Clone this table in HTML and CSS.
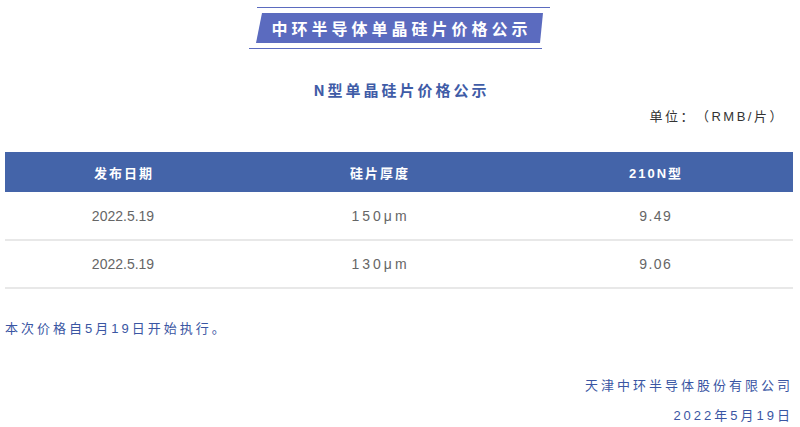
FILE: index.html
```html
<!DOCTYPE html>
<html lang="zh">
<head>
<meta charset="utf-8">
<link rel="stylesheet" href="styles.css">
</head>
<body>
<div class="banner">
  <div class="rule rule-top"></div>
  <div class="plate">中环半导体单晶硅片价格公示</div>
  <div class="rule rule-bottom"></div>
</div>
<h2 class="subtitle">N型单晶硅片价格公示</h2>
<div class="unit">单位：（RMB/片）</div>
<table class="prices">
  <colgroup><col class="c1"><col class="c2"><col class="c3"></colgroup>
  <thead>
    <tr><th>发布日期</th><th>硅片厚度</th><th>210N型</th></tr>
  </thead>
  <tbody>
    <tr><td class="date">2022.5.19</td><td class="thick">150μm</td><td class="price">9.49</td></tr>
    <tr><td class="date">2022.5.19</td><td class="thick">130μm</td><td class="price">9.06</td></tr>
  </tbody>
</table>
<p class="note">本次价格自5月19日开始执行。</p>
<div class="sign">
  <div class="company">天津中环半导体股份有限公司</div>
  <div class="sdate">2022年5月19日</div>
</div>
</body>
</html>
```

FILE: styles.css
```css
* { box-sizing: border-box; }
body {
  margin: 0;
  width: 800px;
  background: #ffffff;
  font-family: "Liberation Sans", "Noto Sans CJK SC", sans-serif;
  color: #333333;
  text-spacing-trim: space-all;
}
.banner {
  width: 301px;
  margin: 7px 0 0 249px;
  display: flex;
  flex-direction: column;
}
.rule {
  height: 1px;
  background: #5b6bbf;
}
.rule-top {
  margin-left: 8px;
  width: 293px;
}
.rule-bottom {
  width: 293px;
  margin-top: 5px;
}
.plate {
  margin-top: 5px;
  margin-left: 7px;
  width: 287px;
  height: 30px;
  background: #5b6bbf;
  clip-path: polygon(6px 0, 100% 0, calc(100% - 3px) 100%, 0 100%);
  color: #ffffff;
  font-family: "Noto Sans CJK SC", sans-serif;
  font-weight: 700;
  font-size: 16px;
  letter-spacing: 4px;
  text-indent: 4px;
  line-height: 30px;
  text-align: center;
}
.subtitle {
  margin: 31px 0 0 0;
  font-family: "Noto Sans CJK SC", sans-serif;
  font-size: 15px;
  font-weight: 700;
  letter-spacing: 3px;
  text-indent: 3px;
  line-height: 20px;
  text-align: center;
  color: #3f5ca7;
}
.unit {
  margin-top: 8px;
  line-height: 18px;
  font-size: 13px;
  letter-spacing: 2.5px;
  text-align: right;
  padding-right: 15px;
  color: #333333;
}
.prices {
  margin: 26px 0 0 5px;
  width: 788px;
  border-collapse: collapse;
  table-layout: fixed;
}
.c1 { width: 236px; }
.c2 { width: 276px; }
.c3 { width: 276px; }
.prices th {
  height: 40px;
  padding: 0;
  background: #4464a9;
  color: #ffffff;
  font-size: 13px;
  font-weight: 700;
  letter-spacing: 2px;
  text-indent: 2px;
  text-align: center;
  vertical-align: middle;
}
.prices td {
  height: 48px;
  padding: 0;
  border-bottom: 2px solid #e8e8e8;
  text-align: center;
  vertical-align: middle;
  color: #666666;
  font-size: 14px;
}
.prices td.thick {
  letter-spacing: 3px;
  text-indent: 3px;
}
.prices td.price {
  letter-spacing: 1.5px;
  text-indent: 1.5px;
}
.note {
  margin: 30px 0 0 5px;
  line-height: 20px;
  font-size: 13px;
  letter-spacing: 3px;
  color: #3a56a3;
}
.sign {
  margin-top: 37px;
  padding-right: 7px;
  text-align: right;
  color: #3a56a3;
  font-size: 13px;
  letter-spacing: 3px;
  line-height: 20px;
}
.sdate {
  margin-top: 10px;
}
```
